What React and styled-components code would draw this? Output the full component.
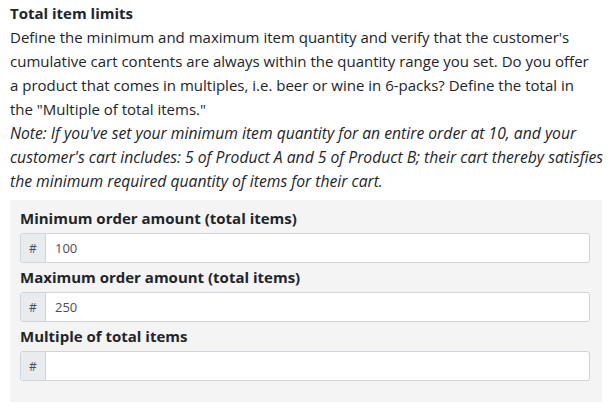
import React from "react";
import styled, { createGlobalStyle } from "styled-components";

const Global = createGlobalStyle`
  html, body { margin: 0; padding: 0; background: #fff; }
  body { font-family: "Open Sans", "Noto Sans", sans-serif; color: #212529; }
`;

const Page = styled.div`
  width: 592px;
  padding: 1px 14px 0 10px;
`;

const Title = styled.div`
  font-size: 15px;
  font-weight: 700;
  line-height: 24px;
`;

const Text = styled.p`
  margin: 0;
  font-size: ${(p) => (p.$italic ? "15.7px" : "15px")};
  line-height: 24px;
  white-space: nowrap;
  font-style: ${(p) => (p.$italic ? "italic" : "normal")};
`;

const Panel = styled.div`
  margin-top: 7px;
  background: #f4f4f4;
  padding: 7px 12px 21px 10px;
  display: flex;
  flex-direction: column;
`;

const Label = styled.div`
  font-size: 15px;
  font-weight: 700;
  line-height: 22px;
  margin: ${(p) => (p.$first ? "0" : "3px")} 0 4px;
`;

const Group = styled.div`
  display: flex;
  height: 30px;
  box-sizing: border-box;
  border: 1px solid #ced4da;
  border-radius: 3px;
  background: #fff;
  overflow: hidden;
`;

const Addon = styled.span`
  width: 24px;
  flex: none;
  display: flex;
  align-items: center;
  justify-content: center;
  background: #e9ecef;
  border-right: 1px solid #ced4da;
  font-size: 12px;
  color: #495057;
`;

const Input = styled.input`
  flex: 1;
  border: 0;
  outline: none;
  padding: 0 9px;
  font-family: "Open Sans", "Noto Sans", sans-serif;
  font-size: 13px;
  color: #495057;
  background: transparent;
`;

const fields = [
  { label: "Minimum order amount (total items)", value: "100" },
  { label: "Maximum order amount (total items)", value: "250" },
  { label: "Multiple of total items", value: "" },
];

export default function App() {
  return (
    <>
      <Global />
      <Page>
        <Title>Total item limits</Title>
        <Text>
          Define the minimum and maximum item quantity and verify that the customer's
          <br />
          cumulative cart contents are always within the quantity range you set. Do you offer
          <br />
          a product that comes in multiples, i.e. beer or wine in 6-packs? Define the total in
          <br />
          the "Multiple of total items."
        </Text>
        <Text $italic>
          Note: If you've set your minimum item quantity for an entire order at 10, and your
          <br />
          customer's cart includes: 5 of Product A and 5 of Product B; their cart thereby satisfies
          <br />
          the minimum required quantity of items for their cart.
        </Text>
        <Panel>
          {fields.map((f, i) => (
            <React.Fragment key={f.label}>
              <Label $first={i === 0}>{f.label}</Label>
              <Group>
                <Addon>#</Addon>
                <Input defaultValue={f.value} />
              </Group>
            </React.Fragment>
          ))}
        </Panel>
      </Page>
    </>
  );
}
